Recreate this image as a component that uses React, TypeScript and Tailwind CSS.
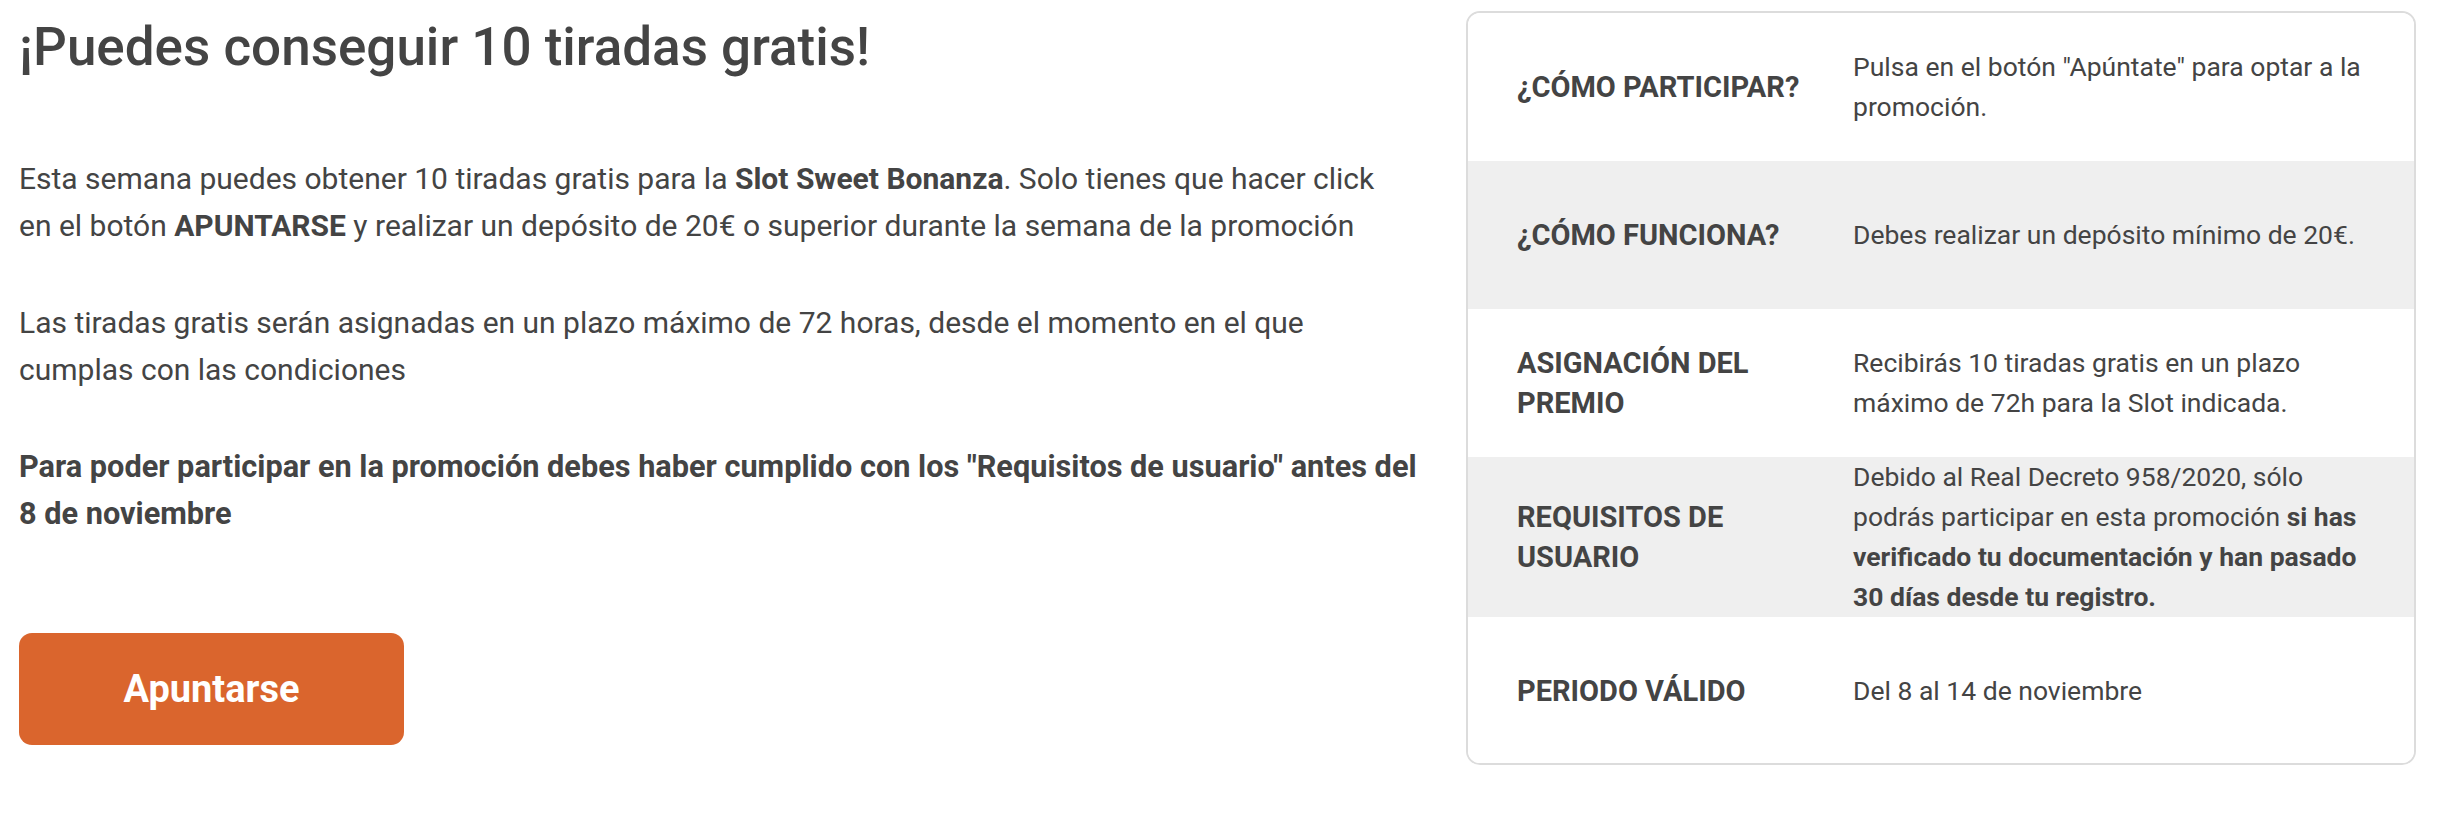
import { ReactNode } from 'react'

type Row = {
  label: ReactNode
  value: ReactNode
  shaded?: boolean
}

const ROWS: Row[] = [
  {
    label: '¿CÓMO PARTICIPAR?',
    value: 'Pulsa en el botón "Apúntate" para optar a la promoción.',
  },
  {
    label: '¿CÓMO FUNCIONA?',
    value: 'Debes realizar un depósito mínimo de 20€.',
    shaded: true,
  },
  {
    label: 'ASIGNACIÓN DEL PREMIO',
    value: 'Recibirás 10 tiradas gratis en un plazo máximo de 72h para la Slot indicada.',
  },
  {
    label: 'REQUISITOS DE USUARIO',
    value: (
      <>
        Debido al Real Decreto 958/2020, sólo podrás participar en esta promoción{' '}
        <strong className="font-bold">si has verificado tu documentación y han pasado 30 días desde tu registro.</strong>
      </>
    ),
    shaded: true,
  },
  {
    label: 'PERIODO VÁLIDO',
    value: 'Del 8 al 14 de noviembre',
  },
]

export default function App() {
  return (
    <div className="flex h-[832px] w-full bg-white font-['Roboto',sans-serif] text-[#444444]">
      {/* Promo copy */}
      <div className="flex-1 pl-[19px] pt-[17px]">
        <h1 className="text-[53px] font-medium leading-[60px]">¡Puedes conseguir 10 tiradas gratis!</h1>

        <div className="mt-[78px] w-[1430px] text-[30px] leading-[47px]">
          <p>
            Esta semana puedes obtener 10 tiradas gratis para la <strong className="font-bold">Slot Sweet Bonanza</strong>. Solo tienes que hacer click
            <br />
            en el botón <strong className="font-bold">APUNTARSE</strong> y realizar un depósito de 20€ o superior durante la semana de la promoción
          </p>
          <p className="mt-[50px]">
            Las tiradas gratis serán asignadas en un plazo máximo de 72 horas, desde el momento en el que
            <br />
            cumplas con las condiciones
          </p>
          <p className="mt-[50px] text-[30.7px] font-bold">
            Para poder participar en la promoción debes haber cumplido con los "Requisitos de usuario" antes del
            <br />8 de noviembre
          </p>
        </div>

        <button className="mt-[96px] flex h-[112px] w-[385px] items-center justify-center rounded-[13px] bg-[#da652d] text-[38px] font-bold text-white">
          Apuntarse
        </button>
      </div>

      {/* Info card */}
      <div className="mr-[46px] mt-[11px] h-[754px] w-[950px] overflow-hidden rounded-[14px] border-2 border-[#dcdcdc]">
        {ROWS.map((row, i) => (
          <div
            key={i}
            className={`flex min-h-[148px] items-center ${row.shaded ? 'bg-[#efefef]' : 'bg-white'}`}
          >
            <div className="w-[385px] shrink-0 pl-[49px] pr-[30px] text-[29px] font-bold leading-[40px]">{row.label}</div>
            <div className="flex-1 pr-[36px] text-[26.5px] leading-[40px]">{row.value}</div>
          </div>
        ))}
      </div>
    </div>
  )
}
